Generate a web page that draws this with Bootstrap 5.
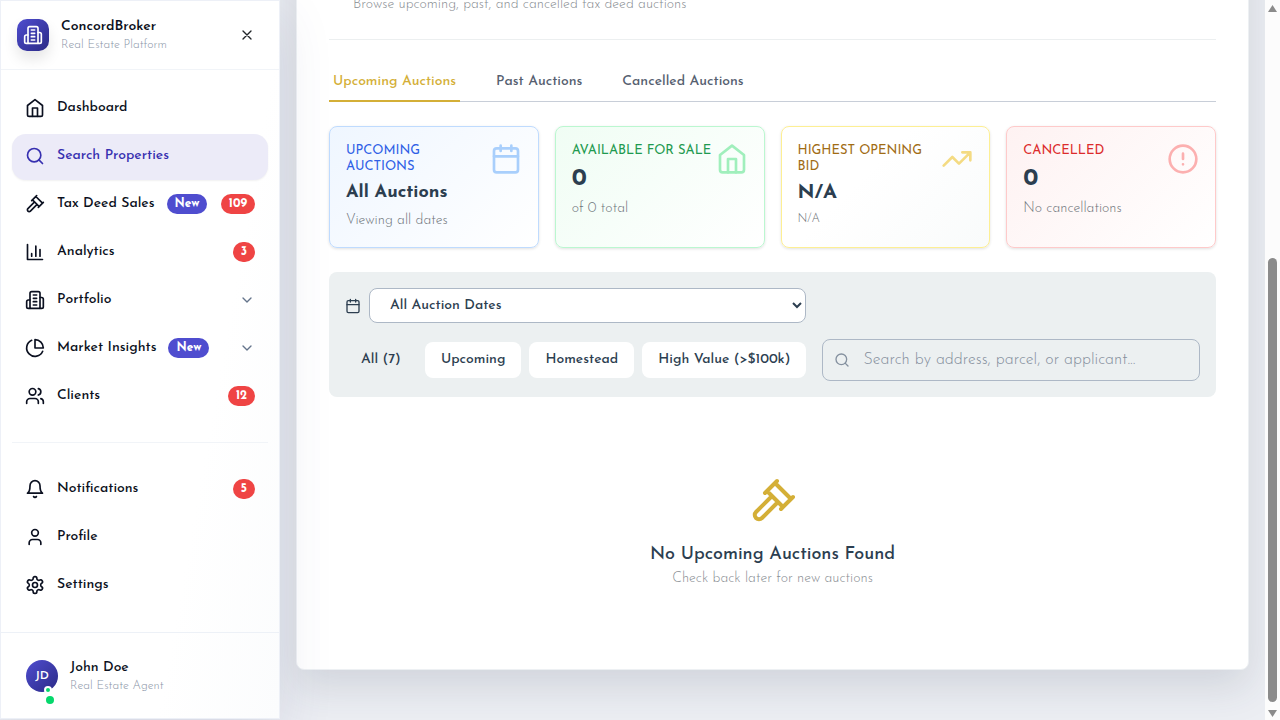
<!DOCTYPE html>
<html lang="en">
<head>
<meta charset="utf-8">
<meta name="viewport" content="width=device-width, initial-scale=1">
<title>ConcordBroker – Tax Deed Sales</title>
<link href="https://cdn.jsdelivr.net/npm/bootstrap@5.3.0/dist/css/bootstrap.min.css" rel="stylesheet">
<style>
  body { font-family: "Josefin Sans", Lato, sans-serif; font-size: 14px; line-height: 20px; color: #2c3e50; background: #eceef3; }
  .ico { width: 20px; height: 20px; flex: none; fill: none; stroke: currentColor; stroke-width: 2; stroke-linecap: round; stroke-linejoin: round; }
  .ico-sm { width: 16px; height: 16px; }
  .ico-lg { width: 32px; height: 32px; }
  .ico-xl { width: 48px; height: 48px; color: #d4af37; }
  .thin { font-weight: 300; }

  /* Sidebar */
  .sidebar { width: 280px; flex: none; z-index: 2; color: #0b1020; background: linear-gradient(100deg, #fff 70%, #fbfcfd); border: 1px solid #edf0f7; box-shadow: 0 20px 50px rgba(60, 70, 120, .13); margin-bottom: 1px; }
  .brand-row { height: 69px; padding: 0 24px 0 16px; border-bottom: 1px solid #f1f4f8; }
  .brand-mark { width: 32px; height: 32px; border-radius: 10px; color: #fff; background: linear-gradient(135deg, #4f4dcf, #2b2a86); box-shadow: 0 8px 14px rgba(0, 0, 0, .1); }
  .name-text { line-height: 20px; font-weight: 500; }
  .caption-text { font-size: 12px; line-height: 16px; color: #8994a6; font-weight: 300; }
  .side-nav { padding: 16px 11px 0; gap: 2px; }
  .side-link { height: 46px; padding: 0 13px 2px; gap: 12px; border-radius: 14px; color: #0b1020; text-decoration: none; font-weight: 500; }
  .side-link.current { color: #3730b0; background: #ecebf8; box-shadow: 0 1px 2px rgba(0, 0, 0, .06); }
  .side-rule { height: 1px; margin: 20px 0 22px; background: #f1f4f8; }
  .count { height: 20px; padding: 0 8px; border-radius: 10px; background: #ef4444; color: #fff; font-size: 12px; font-weight: 700; }
  .count.fresh { background: #4f4dcf; }
  .label-text { padding-bottom: 1px; }
  .chev { color: #64748b; }
  .user-row { height: 86px; padding: 0 25px; gap: 12px; border-top: 1px solid #edf1f7; }
  .avatar { width: 32px; height: 32px; border-radius: 50%; color: #fff; font-size: 12px; font-weight: 600; background: linear-gradient(135deg, #4f4dcf, #2b2a86); }
  .presence { position: absolute; right: 6px; bottom: -2px; width: 8px; height: 8px; border: 2px solid #fff; border-radius: 50%; background: #05d86c; }
  .pulse { position: absolute; right: 4px; bottom: -12px; width: 8px; height: 8px; border-radius: 50%; background: #05d86c; }

  /* Main panel, scrolled to its end */
  .main-area { padding: 0 16px 50px; }
  .panel { padding: 32px; flex: none; background: #fff; border: 1px solid #edf0f3; border-radius: 8px; box-shadow: 0 16px 40px rgba(44, 62, 80, .15); }
  .panel-head { padding: 24px 24px 22px; border-bottom: 1px solid #eceff0; margin-bottom: 24px; line-height: 24px; color: #878c91; }
  .tab-bar { gap: 32px; border-bottom: 1px solid #c8ced8; margin-bottom: 24px; }
  .tab-btn { padding: 8px 4px; border: 0; border-bottom: 2px solid transparent; margin-bottom: -1px; background: none; color: #566070; font-weight: 500; }
  .tab-btn.current { color: #d4af37; border-color: #d4af37; }
  .stat { height: 100%; padding: 16px; border: 1px solid; border-radius: 8px; box-shadow: 0 1px 3px rgba(0, 0, 0, .12); }
  .stat-name { font-size: 13px; line-height: 16px; font-weight: 400; text-transform: uppercase; }
  .stat-value { font-size: 20px; line-height: 28px; font-weight: 700; margin-top: 4px; }
  .stat-value.words { font-size: 18px; }
  .stat-value.big { font-size: 24px; line-height: 32px; }
  .stat-note { color: #6c7278; margin-top: 4px; }
  .stat-note.tiny { font-size: 12px; line-height: 16px; }
  .stat-blue { border-color: #bfdbfe; background: linear-gradient(135deg, #eff6ff, #fff); }
  .stat-blue .stat-name { color: #2f5fe6; } .stat-blue .ico { color: #a9cffc; }
  .stat-green { border-color: #bbf7d0; background: linear-gradient(135deg, #f0fdf4, #fff); }
  .stat-green .stat-name { color: #1f9a50; } .stat-green .ico { color: #a0efbc; }
  .stat-gold { border-color: #fdef94; background: linear-gradient(135deg, #fff 40%, #f9fbfb); }
  .stat-gold .stat-name { color: #a16c14; } .stat-gold .ico { color: #f4db83; }
  .stat-red { border-color: #fecaca; background: linear-gradient(135deg, #fef2f2, #fff); }
  .stat-red .stat-name { color: #dc2b2b; } .stat-red .ico { color: #fcb0b0; }

  .filters { display: grid; grid-template-columns: minmax(0, 55fr) minmax(0, 45fr); gap: 16px; padding: 16px; margin: 24px 0; border-radius: 8px; background: #ecf0f1; }
  .date-pick { height: 35px; padding: 0 0 0 16px; border: 1px solid #adb8c6; border-radius: 8px; background: #fff; color: #2c3e50; font-weight: 500; }
  .chip { height: 36px; padding: 0 8px; border: 0; border-radius: 8px; background: #fff; color: #2c3e50; font-weight: 500; white-space: nowrap; }
  .chip.plain { background: none; }
  .search-box { height: 42px; padding: 0 16px 0 40px; border: 1px solid #adb8c6; border-radius: 8px; background: none; font-size: 16px; font-weight: 300; color: #2c3e50; }
  .search-box::placeholder { color: #848e9c; opacity: 1; }
  .search-ico { position: absolute; left: 12px; top: 13px; color: #84909f; }
  .empty { padding: 56px 0 48px; }
  .empty h3 { font-size: 18px; line-height: 28px; font-weight: 500; margin: 16px 0 0; }
  .empty p { color: #878c91; }

  .scroll-rail { width: 15px; flex: none; background: #fcfcfc; padding: 5px 0 2px; }
  .scroll-rail svg { width: 9px; height: 8px; fill: #8b8b8b; }
  .scroll-thumb { width: 9px; height: 444px; max-height: 90%; background: #8b8b8b; border-radius: 5px; margin: auto 0 8px; }
</style>
</head>
<body>
<svg class="d-none" aria-hidden="true">
  <symbol id="building" viewBox="0 0 24 24"><path d="M6 22V4a2 2 0 0 1 2-2h8a2 2 0 0 1 2 2v18Z"/><path d="M6 12H4a2 2 0 0 0-2 2v6a2 2 0 0 0 2 2h2M18 9h2a2 2 0 0 1 2 2v9a2 2 0 0 1-2 2h-2M10 6h4M10 10h4M10 14h4M10 18h4"/></symbol>
  <symbol id="house" viewBox="0 0 24 24"><path d="m3 9 9-7 9 7v11a2 2 0 0 1-2 2H5a2 2 0 0 1-2-2z"/><path d="M9 22V12h6v10"/></symbol>
  <symbol id="search" viewBox="0 0 24 24"><circle cx="11" cy="11" r="8"/><path d="m21 21-4.3-4.3"/></symbol>
  <symbol id="gavel" viewBox="0 0 24 24"><path d="m14.5 12.5-8 8a2.119 2.119 0 1 1-3-3l8-8M16 16l6-6M8 8l6-6M9 7l8 8M21 11l-8-8"/></symbol>
  <symbol id="bars" viewBox="0 0 24 24"><path d="M3 3v18h18M18 17V9M13 17V5M8 17v-3"/></symbol>
  <symbol id="pie" viewBox="0 0 24 24"><path d="M21.21 15.89A10 10 0 1 1 8 2.83"/><path d="M22 12A10 10 0 0 0 12 2v10z"/></symbol>
  <symbol id="users" viewBox="0 0 24 24"><path d="M16 21v-2a4 4 0 0 0-4-4H6a4 4 0 0 0-4 4v2M22 21v-2a4 4 0 0 0-3-3.87M16 3.13a4 4 0 0 1 0 7.75"/><circle cx="9" cy="7" r="4"/></symbol>
  <symbol id="bell" viewBox="0 0 24 24"><path d="M6 8a6 6 0 0 1 12 0c0 7 3 9 3 9H3s3-2 3-9M10.3 21a1.94 1.94 0 0 0 3.4 0"/></symbol>
  <symbol id="user" viewBox="0 0 24 24"><path d="M19 21v-2a4 4 0 0 0-4-4H9a4 4 0 0 0-4 4v2"/><circle cx="12" cy="7" r="4"/></symbol>
  <symbol id="gear" viewBox="0 0 24 24"><path d="M12.22 2h-.44a2 2 0 0 0-2 2v.18a2 2 0 0 1-1 1.73l-.43.25a2 2 0 0 1-2 0l-.15-.08a2 2 0 0 0-2.73.73l-.22.38a2 2 0 0 0 .73 2.73l.15.1a2 2 0 0 1 1 1.72v.51a2 2 0 0 1-1 1.74l-.15.09a2 2 0 0 0-.73 2.73l.22.38a2 2 0 0 0 2.73.73l.15-.08a2 2 0 0 1 2 0l.43.25a2 2 0 0 1 1 1.73V20a2 2 0 0 0 2 2h.44a2 2 0 0 0 2-2v-.18a2 2 0 0 1 1-1.73l.43-.25a2 2 0 0 1 2 0l.15.08a2 2 0 0 0 2.73-.73l.22-.39a2 2 0 0 0-.73-2.73l-.15-.08a2 2 0 0 1-1-1.74v-.5a2 2 0 0 1 1-1.74l.15-.09a2 2 0 0 0 .73-2.73l-.22-.38a2 2 0 0 0-2.73-.73l-.15.08a2 2 0 0 1-2 0l-.43-.25a2 2 0 0 1-1-1.73V4a2 2 0 0 0-2-2z"/><circle cx="12" cy="12" r="3"/></symbol>
  <symbol id="calendar" viewBox="0 0 24 24"><rect x="3" y="4" width="18" height="18" rx="2"/><path d="M16 2v4M8 2v4M3 10h18"/></symbol>
  <symbol id="trend" viewBox="0 0 24 24"><path d="M22 7l-8.5 8.5-5-5L2 17M16 7h6v6"/></symbol>
  <symbol id="alert" viewBox="0 0 24 24"><circle cx="12" cy="12" r="10"/><path d="M12 8v4M12 16h.01"/></symbol>
  <symbol id="down" viewBox="0 0 24 24"><path d="m6 9 6 6 6-6"/></symbol>
  <symbol id="close" viewBox="0 0 24 24"><path d="M18 6 6 18M6 6l12 12"/></symbol>
</svg>

<div class="d-flex vh-100 overflow-hidden">
  <aside class="sidebar d-flex flex-column">
    <div class="brand-row d-flex align-items-center gap-2">
      <span class="brand-mark d-flex align-items-center justify-content-center me-1"><svg class="ico"><use href="#building"/></svg></span>
      <div class="flex-grow-1">
        <div class="name-text fw-semibold">ConcordBroker</div>
        <div class="caption-text">Real Estate Platform</div>
      </div>
      <button class="btn p-0 border-0 d-flex" type="button" aria-label="Close sidebar"><svg class="ico ico-sm"><use href="#close"/></svg></button>
    </div>
    <nav class="side-nav d-flex flex-column" aria-label="Main">
      <a href="#" class="side-link d-flex align-items-center"><svg class="ico"><use href="#house"/></svg><span class="label-text">Dashboard</span></a>
      <a href="#" class="side-link current d-flex align-items-center" aria-current="page"><svg class="ico"><use href="#search"/></svg><span class="label-text">Search Properties</span></a>
      <a href="#" class="side-link d-flex align-items-center"><svg class="ico"><use href="#gavel"/></svg><span class="label-text">Tax Deed Sales</span><span class="count fresh">New</span><span class="count ms-auto">109</span></a>
      <a href="#" class="side-link d-flex align-items-center"><svg class="ico"><use href="#bars"/></svg><span class="label-text">Analytics</span><span class="count ms-auto">3</span></a>
      <a href="#" class="side-link d-flex align-items-center"><svg class="ico"><use href="#building"/></svg><span class="label-text">Portfolio</span><svg class="ico ico-sm chev ms-auto"><use href="#down"/></svg></a>
      <a href="#" class="side-link d-flex align-items-center"><svg class="ico"><use href="#pie"/></svg><span class="label-text">Market Insights</span><span class="count fresh">New</span><svg class="ico ico-sm chev ms-auto"><use href="#down"/></svg></a>
      <a href="#" class="side-link d-flex align-items-center"><svg class="ico"><use href="#users"/></svg><span class="label-text">Clients</span><span class="count ms-auto">12</span></a>
      <div class="side-rule"></div>
      <a href="#" class="side-link d-flex align-items-center"><svg class="ico"><use href="#bell"/></svg><span class="label-text">Notifications</span><span class="count ms-auto">5</span></a>
      <a href="#" class="side-link d-flex align-items-center"><svg class="ico"><use href="#user"/></svg><span class="label-text">Profile</span></a>
      <a href="#" class="side-link d-flex align-items-center"><svg class="ico"><use href="#gear"/></svg><span class="label-text">Settings</span></a>
    </nav>
    <div class="user-row d-flex align-items-center mt-auto">
      <div class="avatar position-relative d-flex align-items-center justify-content-center">JD<span class="presence"></span><span class="pulse"></span></div>
      <div>
        <div class="name-text">John Doe</div>
        <div class="caption-text">Real Estate Agent</div>
      </div>
    </div>
  </aside>

  <main class="main-area flex-grow-1 d-flex flex-column justify-content-end overflow-hidden">
    <section class="panel">
      <p class="panel-head thin">Browse upcoming, past, and cancelled tax deed auctions</p>
      <div class="tab-bar d-flex" role="tablist">
        <button class="tab-btn current" type="button" role="tab" aria-selected="true">Upcoming Auctions</button>
        <button class="tab-btn" type="button" role="tab" aria-selected="false">Past Auctions</button>
        <button class="tab-btn" type="button" role="tab" aria-selected="false">Cancelled Auctions</button>
      </div>

      <div class="row g-3">
        <div class="col-3"><div class="stat stat-blue d-flex justify-content-between">
          <div><div class="stat-name">Upcoming<br>Auctions</div><div class="stat-value words">All Auctions</div><div class="stat-note thin">Viewing all dates</div></div>
          <svg class="ico ico-lg"><use href="#calendar"/></svg></div></div>
        <div class="col-3"><div class="stat stat-green d-flex justify-content-between">
          <div><div class="stat-name">Available for Sale</div><div class="stat-value big">0</div><div class="stat-note thin">of 0 total</div></div>
          <svg class="ico ico-lg"><use href="#house"/></svg></div></div>
        <div class="col-3"><div class="stat stat-gold d-flex justify-content-between">
          <div><div class="stat-name">Highest Opening<br>Bid</div><div class="stat-value">N/A</div><div class="stat-note tiny thin">N/A</div></div>
          <svg class="ico ico-lg"><use href="#trend"/></svg></div></div>
        <div class="col-3"><div class="stat stat-red d-flex justify-content-between">
          <div><div class="stat-name">Cancelled</div><div class="stat-value big">0</div><div class="stat-note thin">No cancellations</div></div>
          <svg class="ico ico-lg"><use href="#alert"/></svg></div></div>
      </div>

      <div class="filters">
        <div class="d-flex align-items-center gap-2">
          <label for="auctionDate" class="d-flex" aria-label="Auction date"><svg class="ico ico-sm"><use href="#calendar"/></svg></label>
          <select id="auctionDate" class="date-pick flex-grow-1"><option>All Auction Dates</option></select>
        </div>
        <div></div>
        <div class="d-flex align-items-center gap-2">
          <button class="chip plain flex-fill" type="button">All (7)</button>
          <button class="chip flex-fill" type="button">Upcoming</button>
          <button class="chip flex-fill" type="button">Homestead</button>
          <button class="chip flex-fill" type="button">High Value (&gt;$100k)</button>
        </div>
        <div class="position-relative">
          <svg class="ico ico-sm search-ico"><use href="#search"/></svg>
          <input type="text" class="search-box w-100" aria-label="Search auctions" placeholder="Search by address, parcel, or applicant...">
        </div>
      </div>

      <div class="empty text-center">
        <svg class="ico ico-xl d-block mx-auto"><use href="#gavel"/></svg>
        <h3>No Upcoming Auctions Found</h3>
        <p class="thin mb-0">Check back later for new auctions</p>
      </div>
    </section>
  </main>

  <div class="scroll-rail d-flex flex-column align-items-center" aria-hidden="true">
    <svg viewBox="0 0 9 8"><path d="M4.500 0 9 7H0z"/></svg>
    <div class="scroll-thumb"></div>
    <svg viewBox="0 0 9 8"><path d="M0 0h9L4.500 7z"/></svg>
  </div>
</div>
<script src="https://cdn.jsdelivr.net/npm/bootstrap@5.3.0/dist/js/bootstrap.bundle.min.js"></script>
</body>
</html>
